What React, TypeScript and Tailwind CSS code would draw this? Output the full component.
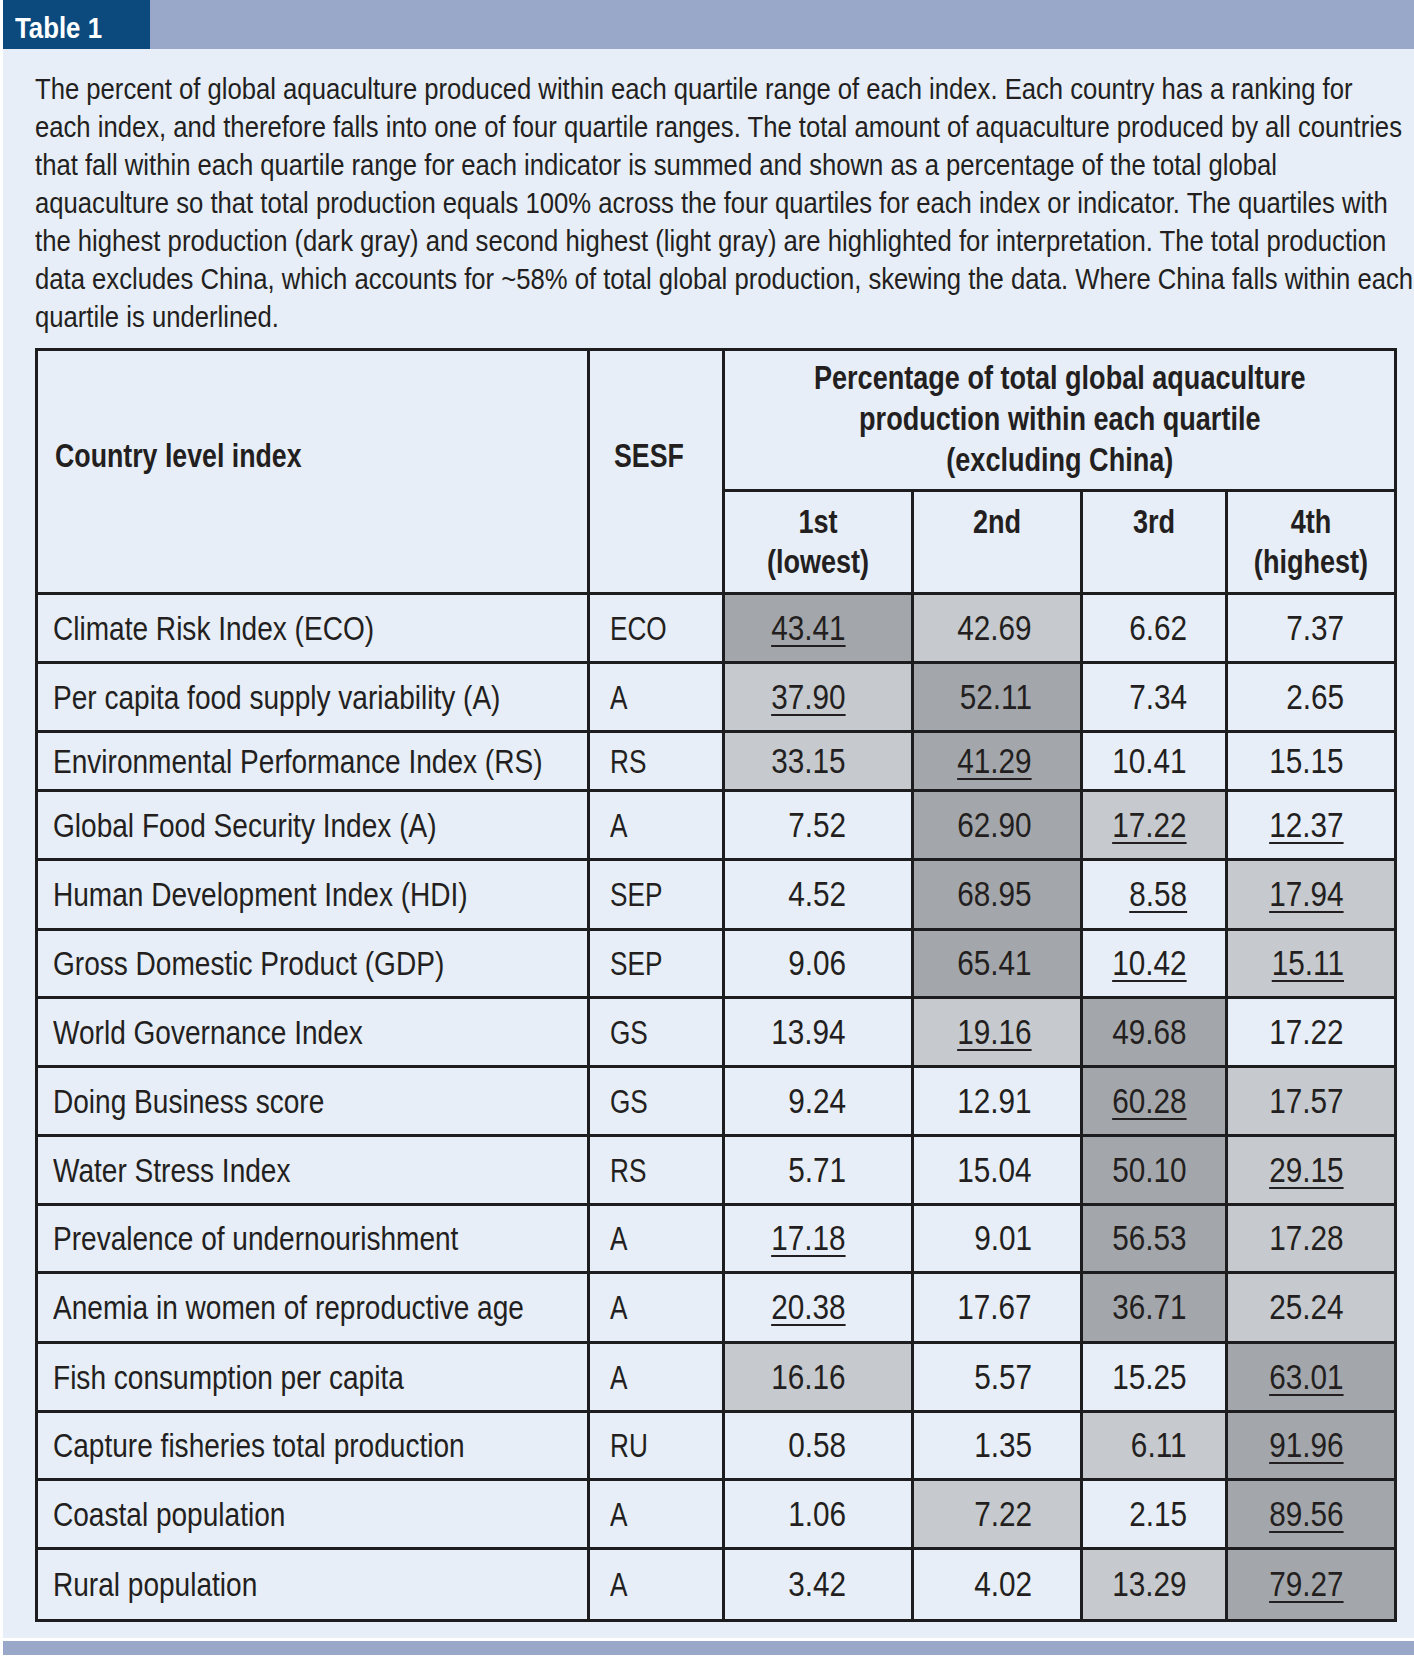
import React from "react";

type Shade = "D" | "L" | "";
type Cell = [string, Shade, boolean?];

interface Row {
  name: string;
  sesf: string;
  vals: Cell[];
}

// -----------------------------
// Table data (shade: D = highest, L = second highest; true = underlined)
// -----------------------------
const rows: Row[] = [
  { name: "Climate Risk Index (ECO)", sesf: "ECO", vals: [["43.41", "D", true], ["42.69", "L"], ["6.62", ""], ["7.37", ""]] },
  { name: "Per capita food supply variability (A)", sesf: "A", vals: [["37.90", "L", true], ["52.11", "D"], ["7.34", ""], ["2.65", ""]] },
  { name: "Environmental Performance Index (RS)", sesf: "RS", vals: [["33.15", "L"], ["41.29", "D", true], ["10.41", ""], ["15.15", ""]] },
  { name: "Global Food Security Index (A)", sesf: "A", vals: [["7.52", ""], ["62.90", "D"], ["17.22", "L", true], ["12.37", "", true]] },
  { name: "Human Development Index (HDI)", sesf: "SEP", vals: [["4.52", ""], ["68.95", "D"], ["8.58", "", true], ["17.94", "L", true]] },
  { name: "Gross Domestic Product (GDP)", sesf: "SEP", vals: [["9.06", ""], ["65.41", "D"], ["10.42", "", true], ["15.11", "L", true]] },
  { name: "World Governance Index", sesf: "GS", vals: [["13.94", ""], ["19.16", "L", true], ["49.68", "D"], ["17.22", ""]] },
  { name: "Doing Business score", sesf: "GS", vals: [["9.24", ""], ["12.91", ""], ["60.28", "D", true], ["17.57", "L"]] },
  { name: "Water Stress Index", sesf: "RS", vals: [["5.71", ""], ["15.04", ""], ["50.10", "D"], ["29.15", "L", true]] },
  { name: "Prevalence of undernourishment", sesf: "A", vals: [["17.18", "", true], ["9.01", ""], ["56.53", "D"], ["17.28", "L"]] },
  { name: "Anemia in women of reproductive age", sesf: "A", vals: [["20.38", "", true], ["17.67", ""], ["36.71", "D"], ["25.24", "L"]] },
  { name: "Fish consumption per capita", sesf: "A", vals: [["16.16", "L"], ["5.57", ""], ["15.25", ""], ["63.01", "D", true]] },
  { name: "Capture fisheries total production", sesf: "RU", vals: [["0.58", ""], ["1.35", ""], ["6.11", "L"], ["91.96", "D", true]] },
  { name: "Coastal population", sesf: "A", vals: [["1.06", ""], ["7.22", "L"], ["2.15", ""], ["89.56", "D", true]] },
  { name: "Rural population", sesf: "A", vals: [["3.42", ""], ["4.02", ""], ["13.29", "L"], ["79.27", "D", true]] },
];

const shadeBg: Record<Shade, string> = {
  D: "bg-[#a3a7ab]",
  L: "bg-[#c6c9cd]",
  "": "bg-[#e7eef7]",
};

const colPad = ["pr-[65px]", "pr-[48px]", "pr-[38px]", "pr-[50px]"];

const intro = [
  "The percent of global aquaculture produced within each quartile range of each index. Each country has a ranking for",
  "each index, and therefore falls into one of four quartile ranges. The total amount of aquaculture produced by all countries",
  "that fall within each quartile range for each indicator is summed and shown as a percentage of the total global",
  "aquaculture so that total production equals 100% across the four quartiles for each index or indicator. The quartiles with",
  "the highest production (dark gray) and second highest (light gray) are highlighted for interpretation. The total production",
  "data excludes China, which accounts for ~58% of total global production, skewing the data. Where China falls within each",
  "quartile is underlined.",
];

export default function App() {
  return (
    <div className="w-[1414px] h-[1670px] bg-white overflow-hidden font-['Liberation_Sans',Arial,sans-serif] text-[#231f20]">
      {/* Title bar */}
      <div className="ml-[3px] h-[49px] flex bg-[#99a7c9]">
        <div className="w-[147px] bg-[#0c4a7e] text-white font-bold text-[30px] leading-[55px] pl-[12px] whitespace-nowrap">
          <span className="inline-block origin-left scale-x-[0.86]">Table 1</span>
        </div>
      </div>

      {/* Panel */}
      <div className="ml-[3px] bg-[#e7eef7] pt-[21px] pb-[16px] pl-[32px] overflow-hidden">
        <div className="text-[30px] leading-[38px] whitespace-nowrap">
          {intro.map((line) => (
            <div key={line} className="origin-left scale-x-[0.855]">
              {line}
            </div>
          ))}
        </div>

        {/* Table */}
        <div className="mt-[12px] w-fit grid grid-cols-[549px_132px_186px_166px_142px_166px] grid-rows-[138px_100px_66px_66px_56px_66px_67px_65px_66px_66px_66px_65px_67px_66px_65px_66px_69px] gap-[3px] p-[3px] bg-[#1d1d1f]">
          <div className="row-span-2 bg-[#e7eef7] font-bold text-[33px] leading-[41px] pl-[17px] pt-[84px] whitespace-nowrap">
            <div className="origin-left scale-x-[0.81]">Country level index</div>
          </div>
          <div className="row-span-2 bg-[#e7eef7] font-bold text-[33px] leading-[41px] pl-[24px] pt-[84px]">
            <div className="origin-left scale-x-[0.81]">SESF</div>
          </div>
          <div className="col-span-4 bg-[#e7eef7] font-bold text-[33px] leading-[41px] flex items-center justify-center text-center whitespace-nowrap pb-[3px]">
            <div className="scale-x-[0.82]">
              Percentage of total global aquaculture
              <br />
              production within each quartile
              <br />
              (excluding China)
            </div>
          </div>
          <div className="bg-[#e7eef7] font-bold text-[33px] leading-[40px] text-center pt-[10px]">
            <div className="scale-x-[0.82]">
              1st
              <br />
              (lowest)
            </div>
          </div>
          <div className="bg-[#e7eef7] font-bold text-[33px] leading-[40px] text-center pt-[10px]">
            <div className="scale-x-[0.82]">2nd</div>
          </div>
          <div className="bg-[#e7eef7] font-bold text-[33px] leading-[40px] text-center pt-[10px]">
            <div className="scale-x-[0.82]">3rd</div>
          </div>
          <div className="bg-[#e7eef7] font-bold text-[33px] leading-[40px] text-center pt-[10px]">
            <div className="scale-x-[0.82]">
              4th
              <br />
              (highest)
            </div>
          </div>

          {rows.map((r) => (
            <React.Fragment key={r.name}>
              <div className="bg-[#e7eef7] flex items-center pl-[15px] text-[34px] whitespace-nowrap">
                <span className="inline-block origin-left scale-x-[0.825]">{r.name}</span>
              </div>
              <div className="bg-[#e7eef7] flex items-center pl-[20px] text-[34px]">
                <span className="inline-block origin-left scale-x-[0.77]">{r.sesf}</span>
              </div>
              {r.vals.map(([v, shade, u], i) => (
                <div key={i} className={`${shadeBg[shade]} ${colPad[i]} flex items-center justify-end text-[35px]`}>
                  <span
                    className={`inline-block origin-right scale-x-[0.85] ${
                      u ? "underline decoration-[1.5px] underline-offset-[5px]" : ""
                    }`}
                  >
                    {v}
                  </span>
                </div>
              ))}
            </React.Fragment>
          ))}
        </div>
      </div>

      {/* Bottom rule */}
      <div className="ml-[3px] mt-[3px] h-[14px] bg-[#99a7c9]" />
    </div>
  );
}
